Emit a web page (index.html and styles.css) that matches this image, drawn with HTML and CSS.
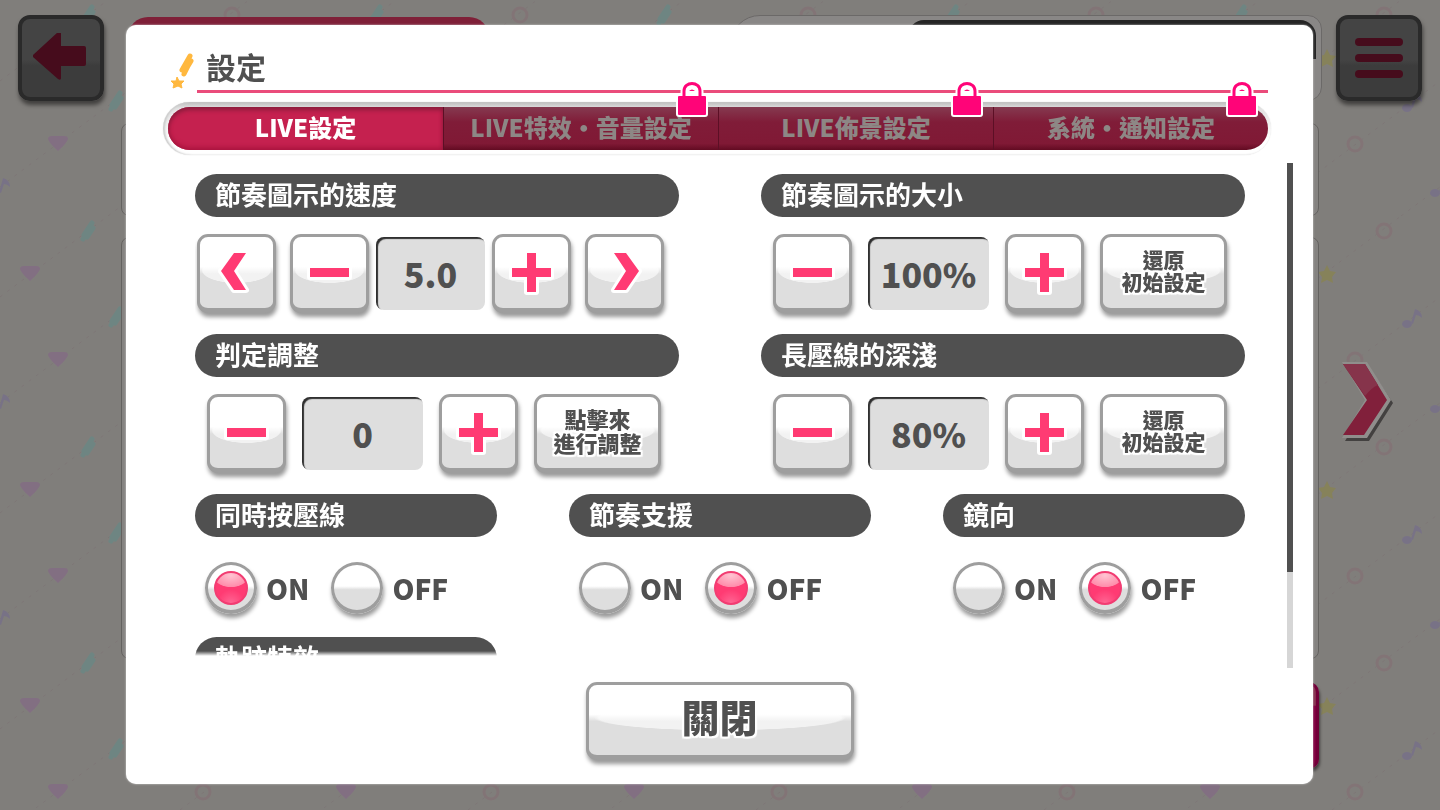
FILE: index.html
```html
<!DOCTYPE html>
<html lang="zh-Hant">
<head>
  <meta charset="UTF-8" />
  <meta name="viewport" content="width=device-width, initial-scale=1.0"/>
  <title>設定</title>
  <link rel="stylesheet" href="styles.css">
</head>
<body>
  <!-- tiled background -->
  <svg class="wallpaper" aria-hidden="true">
    <defs>
      <g id="bolt" fill="none" stroke="#6e8582" stroke-width="5" stroke-linecap="round">
        <path d="M4 -8 L-4 4 M5 -3 L-1 6 M0 0 L-5 8"/>
      </g>
      <g id="heart" fill="#826f82">
        <path d="M-10 -5 Q-10 -8 -6 -8 H6 Q10 -8 10 -5 Q9 -1 0 7 Q-9 -1 -10 -5 Z"/>
      </g>
      <g id="note">
        <ellipse cx="-5" cy="6" rx="5" ry="4" fill="#787286"/>
        <path d="M-1 5 L3 -9 Q10 -7 10 0 Q7 -3 4 -3 L1 6 Z" fill="#787286"/>
      </g>
      <circle id="ring" r="7" fill="none" stroke="#827476" stroke-width="3"/>
      <path id="star" d="M0 -10 L3 -4 L9 -3 L5 2 L6 8 L0 5 L-6 8 L-5 2 L-9 -3 L-3 -4 Z" fill="#86825a"/>
      <pattern id="tile" width="288" height="216" patternUnits="userSpaceOnUse">
        <path d="M0 81 L108 0 M108 216 L288 81 M0 187 L249 0 M249 216 L288 187" stroke="#7d7676" stroke-width="1" stroke-dasharray="3 6"/>
        <use href="#heart" x="58" y="144"/>
        <use href="#heart" x="30" y="58"/>
        <use href="#bolt" x="88" y="15"/>
        <use href="#bolt" x="116" y="101"/>
        <use href="#note" x="0" y="187"/>
        <use href="#note" x="288" y="187"/>
        <use href="#note" x="260" y="102"/>
        <use href="#ring" x="232" y="15"/>
        <use href="#ring" x="203" y="144"/>
        <use href="#star" x="175" y="59"/>
      </pattern>
    </defs>
    <rect width="100%" height="100%" fill="url(#tile)"/>
  </svg>

  <div class="screen">
    <div class="side side-left">
      <button class="corner-btn" aria-label="返回">
        <svg width="56" height="50" viewBox="2 2 56 50"><path d="M1 25 L27 1 Q30 0 30 3 V15 H53 Q55 15 55 17 V33 Q55 35 53 35 H30 V47 Q30 50 27 48 Z" fill="#460c1c"/></svg>
      </button>
    </div>

    <div class="stage">
      <div class="behind behind-title"></div>
      <div class="behind behind-status"></div>
      <div class="behind behind-level"></div>
      <div class="behind behind-card"></div>
      <div class="behind behind-list"></div>
      <div class="behind behind-start"></div>

      <main class="dialog">
        <header class="dialog-header">
          <svg class="title-icon" width="24" height="38" viewBox="0 0 24 38">
            <path d="M19 4 L11 18 M20 9 L14 19 M17 14 L13 22" fill="none" stroke="#ffb83f" stroke-width="5" stroke-linecap="round"/>
            <path d="M6 25 L8 29 L13 29 L10 32 L11 36 L7 34 L2 36 L3 32 L0 29 L5 29 Z" fill="#ffb83f" stroke="#ffb83f" stroke-linejoin="round"/>
          </svg>
          <h1>設定</h1>
        </header>

        <nav class="tabs">
          <button class="tab active">LIVE設定</button>
          <button class="tab locked">LIVE特效・音量設定
            <svg class="lock" width="38" height="40" viewBox="0 0 38 40"><use href="#lock"/></svg>
          </button>
          <button class="tab locked">LIVE佈景設定
            <svg class="lock" width="38" height="40" viewBox="0 0 38 40"><use href="#lock"/></svg>
          </button>
          <button class="tab locked">系統·通知設定
            <svg class="lock" width="38" height="40" viewBox="0 0 38 40"><use href="#lock"/></svg>
          </button>
        </nav>

        <div class="dialog-body">
          <div class="settings">
            <div class="row two">
              <section>
                <h2>節奏圖示的速度</h2>
                <div class="controls five">
                  <button class="btn" aria-label="大幅減少"><svg class="icon"><use href="#prev"/></svg></button>
                  <button class="btn" aria-label="減少"><svg class="icon"><use href="#minus"/></svg></button>
                  <output class="value">5.0</output>
                  <button class="btn" aria-label="增加"><svg class="icon"><use href="#plus"/></svg></button>
                  <button class="btn" aria-label="大幅增加"><svg class="icon"><use href="#next"/></svg></button>
                </div>
              </section>
              <section>
                <h2>節奏圖示的大小</h2>
                <div class="controls">
                  <button class="btn" aria-label="減少"><svg class="icon"><use href="#minus"/></svg></button>
                  <output class="value">100%</output>
                  <button class="btn" aria-label="增加"><svg class="icon"><use href="#plus"/></svg></button>
                  <button class="btn text-btn">還原<br>初始設定</button>
                </div>
              </section>
            </div>

            <div class="row two">
              <section>
                <h2>判定調整</h2>
                <div class="controls">
                  <button class="btn" aria-label="減少"><svg class="icon"><use href="#minus"/></svg></button>
                  <output class="value">0</output>
                  <button class="btn" aria-label="增加"><svg class="icon"><use href="#plus"/></svg></button>
                  <button class="btn text-btn large">點擊來<br>進行調整</button>
                </div>
              </section>
              <section>
                <h2>長壓線的深淺</h2>
                <div class="controls">
                  <button class="btn" aria-label="減少"><svg class="icon"><use href="#minus"/></svg></button>
                  <output class="value">80%</output>
                  <button class="btn" aria-label="增加"><svg class="icon"><use href="#plus"/></svg></button>
                  <button class="btn text-btn">還原<br>初始設定</button>
                </div>
              </section>
            </div>

            <div class="row three">
              <section>
                <h2>同時按壓線</h2>
                <div class="radios">
                  <label><input type="radio" name="sync" checked>ON</label>
                  <label><input type="radio" name="sync">OFF</label>
                </div>
              </section>
              <section>
                <h2>節奏支援</h2>
                <div class="radios">
                  <label><input type="radio" name="assist">ON</label>
                  <label><input type="radio" name="assist" checked>OFF</label>
                </div>
              </section>
              <section>
                <h2>鏡向</h2>
                <div class="radios">
                  <label><input type="radio" name="mirror">ON</label>
                  <label><input type="radio" name="mirror" checked>OFF</label>
                </div>
              </section>
            </div>

            <div class="row three">
              <section>
                <h2>軌跡特效</h2>
              </section>
            </div>
          </div>
          <div class="scrollbar"><div class="thumb"></div></div>
        </div>

        <footer class="dialog-footer">
          <button class="btn close-btn">關閉</button>
        </footer>
      </main>
    </div>

    <div class="side side-right">
      <button class="corner-btn" aria-label="選單">
        <svg width="48" height="42" viewBox="0 0 48 42" fill="#460c1c"><rect width="48" height="8" rx="4" y="1"/><rect width="48" height="8" rx="4" y="17"/><rect width="48" height="8" rx="4" y="33"/></svg>
      </button>
      <button class="next-btn" aria-label="下一頁">
        <svg width="56" height="82" viewBox="0 0 56 82">
          <path d="M4 6 H28 L52 42 L28 80 H4 L27 42 Z" fill="#434140"/>
          <path d="M1 1 H26 L50 39 L26 77 H1 L24 39 Z" fill="#908e8c"/>
          <path d="M2 3 H24 L46 39 L23 74 H2 L26 39 Z" fill="#81203b"/>
          <path d="M2 3 H24 L37 24 Q30 27 24 35 Z" fill="#86344b"/>
        </svg>
      </button>
    </div>
  </div>

  <!-- shared icons -->
  <svg class="sprite" width="0" height="0" aria-hidden="true">
    <symbol id="minus" viewBox="0 0 50 50">
      <path d="M5 20 H44 V29 H5 Z" fill="#ff3b73" stroke="#fff" stroke-width="6" stroke-linejoin="round" paint-order="stroke"/>
    </symbol>
    <symbol id="plus" viewBox="0 0 50 50">
      <path d="M20 5 H29 V20 H44 V29 H29 V44 H20 V29 H5 V20 H20 Z" fill="#ff3b73" stroke="#fff" stroke-width="6" stroke-linejoin="round" paint-order="stroke"/>
    </symbol>
    <symbol id="prev" viewBox="0 0 50 50">
      <path d="M22 5 H34 L22 23 L34 42 H22 L9 23 Z" fill="#ff3b73" stroke="#fff" stroke-width="6" stroke-linejoin="round" paint-order="stroke"/>
    </symbol>
    <symbol id="next" viewBox="0 0 50 50">
      <path d="M14 5 H26 L39 23 L26 42 H14 L26 23 Z" fill="#ff3b73" stroke="#fff" stroke-width="6" stroke-linejoin="round" paint-order="stroke"/>
    </symbol>
    <symbol id="lock" viewBox="0 0 38 40">
      <path d="M11 20 V13 Q11 4 19 4 Q27 4 27 13 V20" fill="#fff" stroke="#fff" stroke-width="7"/>
      <rect x="3" y="15" width="32" height="23" rx="3" fill="#fff"/>
      <path d="M11 18 V12 C11 2 27 2 27 12 V18" fill="none" stroke="#ff0478" stroke-width="3"/>
      <path d="M16 12 Q19 9 22 12 Z" fill="#ff0478"/>
      <rect x="5" y="17" width="28" height="19" rx="1" fill="#ff0478"/>
    </symbol>
  </svg>
</body>
</html>
```
FILE: styles.css
```css
* {
  box-sizing: border-box;
}
body {
  margin: 0;
  background: #807e7b;
  color: #505050;
  font-family: "Noto Sans CJK TC", sans-serif;
  font-weight: 900;
}
button {
  padding: 0;
  border: none;
  background: none;
  color: inherit;
  font: inherit;
  cursor: pointer;
}
svg {
  display: block;
}
.wallpaper {
  position: fixed;
  inset: 0;
  width: 100%;
  height: 100%;
}
.sprite {
  position: absolute;
}

/* screen */
.screen {
  position: relative;
  display: grid;
  grid-template-columns: 126px 1fr 127px;
  min-height: 100vh;
}
.side {
  display: flex;
  flex-direction: column;
  align-items: flex-start;
  padding-top: 15px;
}
.side-left {
  padding-left: 18px;
}
.side-right {
  padding-left: 23px;
  gap: 260px;
}
.corner-btn {
  display: grid;
  place-items: center;
  width: 86px;
  height: 86px;
  border: 4px solid #2a2a2a;
  border-radius: 12px;
  background: linear-gradient(#444 52%, #3c3c3c 60%);
  box-shadow: 1px 4px 4px rgba(0,0,0,0.5);
}
.next-btn {
  margin-left: 5px;
}

/* parts of the screen below, peeking out from under the dialog */
.stage {
  position: relative;
  display: flex;
  padding: 25px 0 26px;
}
.behind {
  position: absolute;
}
.behind-title {
  left: 2px;
  top: 17px;
  width: 361px;
  height: 40px;
  border-radius: 22px;
  background: #7f2038;
}
.behind-status {
  right: -9px;
  top: 15px;
  width: 592px;
  height: 86px;
  border: 1px solid #6b6968;
  border-radius: 30px 14px 14px 30px;
  background: #898786;
}
.behind-level {
  right: -3px;
  top: 20px;
  width: 408px;
  height: 39px;
  border-radius: 16px 16px 0 0;
  background: #252525;
}
.behind-card, .behind-list {
  left: -5px;
  right: -6px;
  border: 1px solid #646260;
  border-radius: 8px;
  background: #858381;
}
.behind-card {
  top: 123px;
  height: 93px;
}
.behind-list {
  top: 237px;
  height: 422px;
}
.behind-start {
  right: -6px;
  top: 682px;
  width: 200px;
  height: 87px;
  border: 3px solid #720039;
  border-radius: 10px;
  background: linear-gradient(#85304f 25%, #800040 26%);
  box-shadow: 1px 3px 3px rgba(0,0,0,0.5);
}

/* dialog */
.dialog {
  position: relative;
  flex: 1;
  display: flex;
  flex-direction: column;
  min-width: 0;
  padding-top: 21px;
  border-radius: 10px;
  background: #fff;
  box-shadow: 0 0 2px #ddd;
}
.dialog-header {
  display: flex;
  align-items: flex-end;
  gap: 2px;
  margin: 0 45px;
}
.title-icon {
  margin-bottom: 3px;
}
h1 {
  flex: 1;
  margin: 0;
  padding: 0 0 4px 9px;
  border-bottom: 3px solid #ea4c7b;
  font-size: 30px;
  line-height: 40px;
}
.tabs {
  display: grid;
  grid-template-columns: repeat(4, 1fr);
  margin: 9px 42px 0 37px;
  padding: 5px 3px 5px 5px;
  border-radius: 27px;
  background: linear-gradient(#bcbcbc, #e2e2e2 12%, #fff 70%);
  box-shadow: inset 2px 0 2px #ccc, 0 0 1px #ccc;
}
.tab {
  position: relative;
  height: 43px;
  padding-bottom: 4px;
  background: #c5214f;
  box-shadow: inset 0 3px 4px #8a1c3c, inset 0 -3px 4px #ad1640;
  color: #fff;
  font-size: 24px;
  line-height: 36px;
}
.tab.locked {
  border-left: 1px solid #5c0f25;
  background: linear-gradient(#853a50, #801c38 35%, #801935 85%, #620b22);
  box-shadow: none;
  color: #8d8785;
}
.tab:first-child {
  border-radius: 22px 0 0 22px;
}
.tab:last-child {
  border-radius: 0 22px 22px 0;
}
.lock {
  position: absolute;
  right: 7px;
  top: -28px;
}
.dialog-body {
  flex: 1;
  display: flex;
  gap: 42px;
  margin: 8px 20px 0 69px;
}
.settings {
  flex: 1;
  height: 493px;
  padding-top: 11px;
  overflow: hidden;
  -webkit-mask-image: linear-gradient(#000 488px, transparent);
  mask-image: linear-gradient(#000 488px, transparent);
}
.scrollbar {
  width: 6px;
  height: 505px;
  background: #d6d6d6;
}
.thumb {
  height: 81%;
  background: #505050;
}
.dialog-footer {
  display: flex;
  justify-content: center;
  padding: 14px 0 24px;
}

/* settings */
.row {
  display: grid;
}
.two {
  grid-template-columns: 1fr 1fr;
  gap: 82px;
}
.three {
  grid-template-columns: 1fr 1fr 1fr;
  gap: 72px;
}
h2 {
  margin: 0;
  padding: 0 0 4px 20px;
  border-radius: 22px;
  background: #505050;
  color: #fff;
  font-size: 26px;
  line-height: 39px;
}
.controls {
  display: flex;
  align-items: center;
  gap: 16px;
  padding: 17px 0 21px 12px;
}
.controls.five {
  gap: 14px;
  padding-left: 2px;
}
.btn {
  display: grid;
  place-items: center;
  flex: none;
  width: 79px;
  height: 79px;
  border: 3px solid #9e9e9e;
  border-bottom-width: 5px;
  border-radius: 11px;
  background:
    linear-gradient(#fff 42%, rgba(255,255,255,0) 52%),
    radial-gradient(ellipse 48% 18% at 50% 47%, #f2f2f2 96%, transparent),
    #dedede;
  box-shadow: 1px 4px 4px rgba(0,0,0,0.4);
}
.icon {
  width: 50px;
  height: 50px;
}
.text-btn {
  width: 127px;
  padding-bottom: 6px;
  font-size: 21px;
  line-height: 22px;
}
.text-btn.large {
  font-size: 22px;
  line-height: 24px;
}
.text-btn, .close-btn {
  text-shadow: 2px 0 1px #fff, -2px 0 1px #fff, 0 2px 1px #fff, 0 -2px 1px #fff,
    2px 2px 1px #fff, -2px 2px 1px #fff, 2px -2px 1px #fff, -2px -2px 1px #fff;
}
.value {
  width: 121px;
  height: 73px;
  padding-top: 2px;
  border-radius: 8px;
  background: #dedede;
  box-shadow: inset 2px 2px 1px #303030;
  font-size: 34px;
  line-height: 70px;
  text-align: center;
}
.five .value {
  width: 109px;
  margin: 0 -7px;
}
.radios {
  display: flex;
  gap: 22px;
  padding: 25px 0 23px 10px;
}
.radios label {
  display: flex;
  align-items: center;
  gap: 9px;
  font-size: 28px;
  line-height: 48px;
}
.radios input {
  appearance: none;
  display: grid;
  place-items: center;
  width: 52px;
  height: 52px;
  margin: 0;
  border: 3px solid #9e9e9e;
  border-bottom-width: 4px;
  border-radius: 50%;
  background: linear-gradient(#fff 47%, #dedede 55%);
  box-shadow: 1px 4px 4px rgba(0,0,0,0.4);
}
.radios input:checked::before {
  content: "";
  width: 34px;
  height: 34px;
  border: 2px solid #f23c72;
  border-radius: 50%;
  box-sizing: border-box;
  background:
    radial-gradient(ellipse 60% 40% at 50% 8%, #ffc4d2, #ff8dab 94%, transparent),
    radial-gradient(circle at 50% 100%, #ff6593, #ff3b73 40%);
}
.close-btn {
  width: 268px;
  height: 78px;
  padding-bottom: 8px;
  font-size: 38px;
  line-height: 60px;
}
```
